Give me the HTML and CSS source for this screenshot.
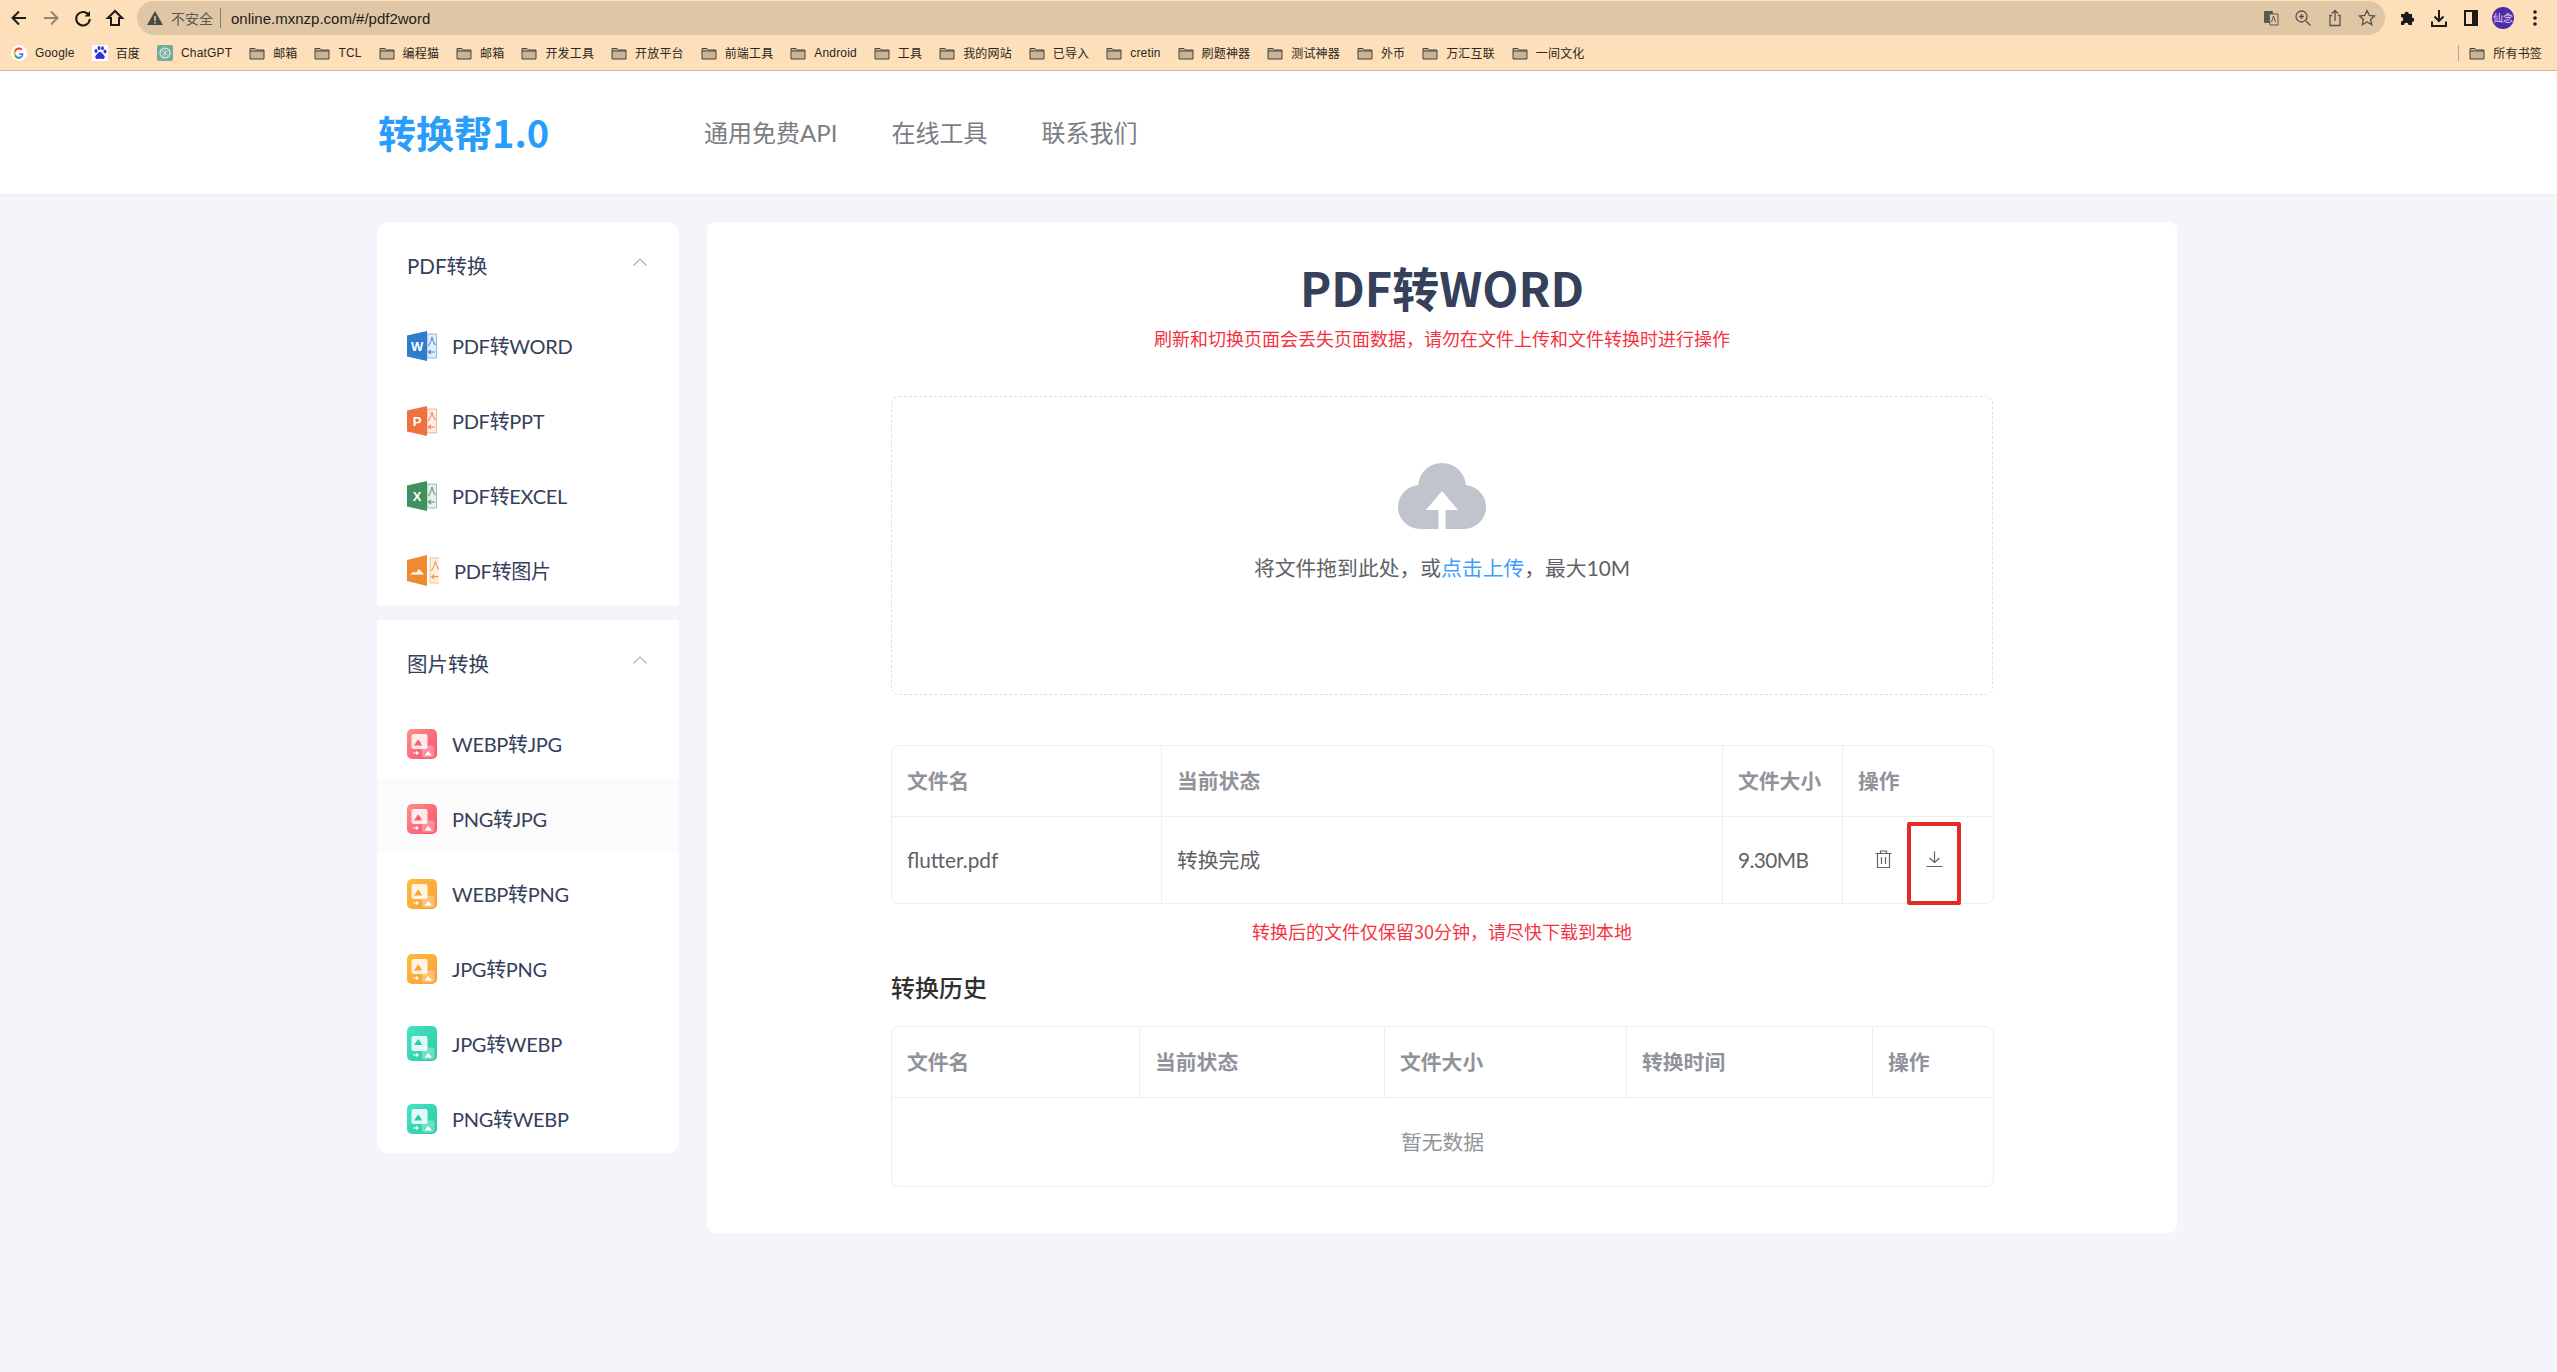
FILE: index.html
```html
<!DOCTYPE html>
<html lang="zh-CN">
<head>
    <meta charset="UTF-8">
    <title>PDF转WORD - 转换帮1.0</title>
    <link rel="stylesheet" href="styles.css">
</head>
<body>

    <!-- Shared icon parts -->
    <svg class="svg-defs" xmlns="http://www.w3.org/2000/svg">
        <defs>
            <linearGradient id="g-red" x1="0" y1="0" x2="1" y2="1"><stop offset="0" stop-color="#fb8f86"/><stop offset="1" stop-color="#fb4f72"/></linearGradient>
            <linearGradient id="g-orange" x1="0" y1="0" x2="1" y2="1"><stop offset="0" stop-color="#fdbb3f"/><stop offset="1" stop-color="#fb9f35"/></linearGradient>
            <linearGradient id="g-green" x1="0" y1="0" x2="1" y2="1"><stop offset="0" stop-color="#45e3c5"/><stop offset="1" stop-color="#2cc9a2"/></linearGradient>
            <symbol id="folder" viewBox="0 0 16 16">
                <path d="M1 3.500h5l1.500 1.500H15v9H1z" fill="#c8b498" stroke="#4a4338" stroke-width="1"/>
                <path d="M1 6h14" stroke="#4a4338" stroke-width="1"/>
            </symbol>
            <symbol id="pdf-panel" viewBox="0 0 30 30">
                <path d="M20 3h9.500v24H20z" fill="currentColor" fill-opacity=".13" stroke="currentColor" stroke-opacity=".5" stroke-width="1"/>
                <path d="M25 6c-1 4-1.500 7-4 9m4-9c1 4 1.500 6 3.500 8" fill="none" stroke="currentColor" stroke-opacity=".75" stroke-width="1.200"/>
                <path d="M28 21h-6m2-2-2.500 2 2.500 2" fill="none" stroke="currentColor" stroke-opacity=".85" stroke-width="1.200"/>
            </symbol>
            <symbol id="tile-art" viewBox="0 0 30 30">
                <rect x="4.500" y="5" width="16" height="15" rx="2" fill="#fff" fill-opacity=".85"/>
                <rect x="15" y="16.500" width="12.500" height="12" rx="2" fill="#fff" fill-opacity=".3"/>
                <path d="M17.500 26.500l3.700-4.500 3.700 4.500z" fill="#fff"/>
                <path d="M6 24h4.500m-1.500-1.500 2 1.500-2 1.500" fill="none" stroke="#fff" stroke-width="1.200"/>
            </symbol>
        </defs>
    </svg>

    <!-- Browser chrome -->
    <div class="browser-toolbar">
        <div class="nav-buttons">
            <svg class="tb-icon" viewBox="0 0 20 20"><path d="M17 10H4M10 3.500 3.500 10l6.500 6.500" class="tb-line"/></svg>
            <svg class="tb-icon tb-off" viewBox="0 0 20 20"><path d="M3 10h13M10 3.500l6.500 6.500-6.500 6.500" class="tb-line"/></svg>
            <svg class="tb-icon" viewBox="0 0 20 20"><path d="M16 7.500A6.800 6.800 0 1 0 16.800 11" class="tb-line"/><path d="M17 3v5.500h-5.500z" fill="currentColor"/></svg>
            <svg class="tb-icon" viewBox="0 0 20 20"><path d="M10 3 2.800 10H6v7h8v-7h3.200z" class="tb-line"/></svg>
        </div>
        <div class="url-bar">
            <svg class="url-warn" viewBox="0 0 18 18"><path d="M9 2 17 16H1z" fill="#4c4a47"/><path d="M8.200 7h1.600v5H8.200zM8.200 13h1.600v1.500H8.200z" fill="#dfc6a5"/></svg>
            <span class="url-flag">不安全</span>
            <span class="url-address">online.mxnzp.com/#/pdf2word</span>
            <div class="url-actions">
                <svg class="tb-icon tb-soft" viewBox="0 0 20 20"><rect x="3" y="3" width="9" height="12" rx="1" fill="#5a5650"/><path d="M8 6h9v11H9z" fill="#dfc6a5" stroke="#5a5650"/><path d="M10.500 14l2-6 2 6" fill="none" stroke="#5a5650"/></svg>
                <svg class="tb-icon tb-soft" viewBox="0 0 20 20"><circle cx="8.500" cy="8.500" r="5.500" class="tb-thin"/><path d="M13 13l4.500 4.500M8.500 6v5M6 8.500h5" class="tb-thin"/></svg>
                <svg class="tb-icon tb-soft" viewBox="0 0 20 20"><path d="M7 7.500H5v10h10v-10h-2M10 13V2.500M7 5.500l3-3 3 3" class="tb-thin"/></svg>
                <svg class="tb-icon tb-soft" viewBox="0 0 20 20"><path d="M10 2.500l2.300 5 5.200.5-3.900 3.500 1.100 5.300L10 14l-4.700 2.800 1.100-5.300L2.500 8l5.200-.5z" class="tb-thin"/></svg>
            </div>
        </div>
        <div class="browser-actions">
            <svg class="tb-icon" viewBox="0 0 20 20"><path d="M4 6h3.500a2.200 2.200 0 1 1 4.400 0H15v3.500a2.200 2.200 0 1 1 0 4.400V17h-3.500a2.200 2.200 0 1 0-4.400 0H4v-3.500a2.200 2.200 0 1 0 0-4.400z" fill="currentColor"/></svg>
            <svg class="tb-icon" viewBox="0 0 20 20"><path d="M10 2v11M5.500 8.500 10 13l4.500-4.500M3 13.500V18h14v-4.500" class="tb-line"/></svg>
            <svg class="tb-icon" viewBox="0 0 20 20"><path d="M4 3h12v14H4z" class="tb-line"/><path d="M11 3h5v14h-5z" fill="currentColor"/></svg>
            <span class="avatar">仙念</span>
            <svg class="tb-icon" viewBox="0 0 20 20"><circle cx="10" cy="4" r="1.800" fill="currentColor"/><circle cx="10" cy="10" r="1.800" fill="currentColor"/><circle cx="10" cy="16" r="1.800" fill="currentColor"/></svg>
        </div>
    </div>

    <div class="bookmarks-bar">
        <a class="bookmark">
            <svg class="bm-icon" viewBox="0 0 16 16"><circle cx="8" cy="8" r="8" fill="#fff"/><path d="M12.500 8.300H8.200v1.700h2.500a2.800 2.800 0 0 1-2.700 1.800V14a5 5 0 0 0 4.500-5.700z" fill="#4285f4"/><path d="M4.900 9.500 3.200 10.800A5.400 5.400 0 0 0 8 14v-2.200a3 3 0 0 1-3.100-2.300z" fill="#34a853"/><path d="M4.900 9.500a3.300 3.300 0 0 1 0-2.500L3.200 5.600a5.600 5.600 0 0 0 0 5.200z" fill="#fbbc05"/><path d="M8 4.600c.8 0 1.500.3 2 .8l1.500-1.500A5.200 5.200 0 0 0 3.200 5.600L4.900 7A3.100 3.100 0 0 1 8 4.600z" fill="#ea4335"/></svg>
            Google
        </a>
        <a class="bookmark">
            <svg class="bm-icon" viewBox="0 0 16 16"><rect width="16" height="16" fill="#fff"/><g fill="#2932e1"><ellipse cx="4" cy="6" rx="1.500" ry="2"/><ellipse cx="7" cy="3" rx="1.500" ry="2"/><ellipse cx="10.500" cy="3.200" rx="1.400" ry="2"/><ellipse cx="13" cy="6.500" rx="1.500" ry="2"/><path d="M8 7c2 0 2.500 2 4 3.200 1.500 1.300.5 4.300-2 3.800-1.200-.2-2.800-.2-4 0-2.500.4-3.500-2.500-2-3.800C5.500 9 6 7 8 7z"/></g></svg>
            百度
        </a>
        <a class="bookmark">
            <svg class="bm-icon" viewBox="0 0 16 16"><rect width="16" height="16" rx="2" fill="#74aa9c"/><circle cx="8" cy="8" r="5" fill="none" stroke="#dcebe6" stroke-width="1.200"/><path d="M5 5.500l6 5M11 5.500l-6 5M8 3v10" stroke="#dcebe6" stroke-width=".8"/></svg>
            ChatGPT
        </a>
        <a class="bookmark"><svg class="bm-icon"><use href="#folder"/></svg>邮箱</a>
        <a class="bookmark"><svg class="bm-icon"><use href="#folder"/></svg>TCL</a>
        <a class="bookmark"><svg class="bm-icon"><use href="#folder"/></svg>编程猫</a>
        <a class="bookmark"><svg class="bm-icon"><use href="#folder"/></svg>邮箱</a>
        <a class="bookmark"><svg class="bm-icon"><use href="#folder"/></svg>开发工具</a>
        <a class="bookmark"><svg class="bm-icon"><use href="#folder"/></svg>开放平台</a>
        <a class="bookmark"><svg class="bm-icon"><use href="#folder"/></svg>前端工具</a>
        <a class="bookmark"><svg class="bm-icon"><use href="#folder"/></svg>Android</a>
        <a class="bookmark"><svg class="bm-icon"><use href="#folder"/></svg>工具</a>
        <a class="bookmark"><svg class="bm-icon"><use href="#folder"/></svg>我的网站</a>
        <a class="bookmark"><svg class="bm-icon"><use href="#folder"/></svg>已导入</a>
        <a class="bookmark"><svg class="bm-icon"><use href="#folder"/></svg>cretin</a>
        <a class="bookmark"><svg class="bm-icon"><use href="#folder"/></svg>刷题神器</a>
        <a class="bookmark"><svg class="bm-icon"><use href="#folder"/></svg>测试神器</a>
        <a class="bookmark"><svg class="bm-icon"><use href="#folder"/></svg>外币</a>
        <a class="bookmark"><svg class="bm-icon"><use href="#folder"/></svg>万汇互联</a>
        <a class="bookmark"><svg class="bm-icon"><use href="#folder"/></svg>一间文化</a>
        <a class="bookmark bookmark-all"><svg class="bm-icon"><use href="#folder"/></svg>所有书签</a>
    </div>

    <!-- Site header -->
    <header class="site-header">
        <div class="container header-inner">
            <a class="logo">转换帮1.0</a>
            <nav class="main-nav">
                <a>通用免费API</a>
                <a>在线工具</a>
                <a>联系我们</a>
            </nav>
        </div>
    </header>

    <div class="container page-body">

        <!-- Sidebar -->
        <aside class="sidebar">
            <section class="menu-group menu-group-first">
                <div class="menu-title">
                    <span>PDF转换</span>
                    <svg class="chevron" viewBox="0 0 14 8"><path d="M.5 7.500 7 1l6.500 6.500"/></svg>
                </div>
                <a class="menu-item">
                    <svg class="menu-icon doc-word" viewBox="0 0 30 30"><path d="M0 4.500 20 0v30L0 25.500z" fill="currentColor"/><text x="10" y="19.500" class="doc-letter">W</text><use href="#pdf-panel"/></svg>
                    PDF转WORD
                </a>
                <a class="menu-item">
                    <svg class="menu-icon doc-ppt" viewBox="0 0 30 30"><path d="M0 4.500 20 0v30L0 25.500z" fill="currentColor"/><text x="10" y="19.500" class="doc-letter">P</text><use href="#pdf-panel"/></svg>
                    PDF转PPT
                </a>
                <a class="menu-item">
                    <svg class="menu-icon doc-excel" viewBox="0 0 30 30"><path d="M0 4.500 20 0v30L0 25.500z" fill="currentColor"/><text x="10" y="19.500" class="doc-letter">X</text><use href="#pdf-panel"/></svg>
                    PDF转EXCEL
                </a>
                <a class="menu-item">
                    <svg class="menu-icon menu-icon-wide doc-image" viewBox="0 0 32 31"><path d="M0 5 20 0v31L0 26z" fill="currentColor"/><path d="M3 19.500l4-3 2 1.500 3-4 5 5.500z" fill="#fff"/><use href="#pdf-panel" x="2"/></svg>
                    PDF转图片
                </a>
            </section>

            <section class="menu-group menu-group-last">
                <div class="menu-title">
                    <span>图片转换</span>
                    <svg class="chevron" viewBox="0 0 14 8"><path d="M.5 7.500 7 1l6.500 6.500"/></svg>
                </div>
                <a class="menu-item">
                    <svg class="menu-icon tile-red" viewBox="0 0 30 30"><rect width="30" height="30" rx="5" fill="url(#g-red)"/><use href="#tile-art"/><path d="M7 16.500l4-6 2 2 2 4z" fill="currentColor"/></svg>
                    WEBP转JPG
                </a>
                <a class="menu-item menu-item-hover">
                    <svg class="menu-icon tile-red" viewBox="0 0 30 30"><rect width="30" height="30" rx="5" fill="url(#g-red)"/><use href="#tile-art"/><path d="M7 16.500l4-6 2 2 2 4z" fill="currentColor"/></svg>
                    PNG转JPG
                </a>
                <a class="menu-item">
                    <svg class="menu-icon tile-orange" viewBox="0 0 30 30"><rect width="30" height="30" rx="5" fill="url(#g-orange)"/><use href="#tile-art"/><path d="M7 16.500l4-6 2 2 2 4z" fill="currentColor"/></svg>
                    WEBP转PNG
                </a>
                <a class="menu-item">
                    <svg class="menu-icon tile-orange" viewBox="0 0 30 30"><rect width="30" height="30" rx="5" fill="url(#g-orange)"/><use href="#tile-art"/><path d="M7 16.500l4-6 2 2 2 4z" fill="currentColor"/></svg>
                    JPG转PNG
                </a>
                <a class="menu-item">
                    <svg class="menu-icon menu-icon-tall tile-green" viewBox="0 0 30 35" preserveAspectRatio="none"><rect width="30" height="35" rx="5" fill="url(#g-green)"/><use href="#tile-art" y="2.500"/><path d="M7 19l4-6 2 2 2 4z" fill="currentColor"/></svg>
                    JPG转WEBP
                </a>
                <a class="menu-item">
                    <svg class="menu-icon tile-green" viewBox="0 0 30 30"><rect width="30" height="30" rx="5" fill="url(#g-green)"/><use href="#tile-art"/><path d="M7 16.500l4-6 2 2 2 4z" fill="currentColor"/></svg>
                    PNG转WEBP
                </a>
            </section>
        </aside>

        <!-- Main card -->
        <main class="main-card">
            <h1 class="page-title">PDF转WORD</h1>
            <p class="warn-text warn-top">刷新和切换页面会丢失页面数据&#xFF0C;请勿在文件上传和文件转换时进行操作</p>

            <div class="upload-box">
                <svg class="upload-cloud" viewBox="0 0 88 66">
                    <g fill="#c0c4cc">
                        <circle cx="44" cy="24" r="24"/>
                        <circle cx="22" cy="44" r="22"/>
                        <circle cx="66" cy="44" r="22"/>
                        <rect x="22" y="30" width="44" height="36"/>
                    </g>
                    <path d="M44 28 60 47H47.500V66h-7V47H28z" fill="#fff"/>
                </svg>
                <p class="upload-text">将文件拖到此处&#xFF0C;或<a class="upload-link">点击上传</a>&#xFF0C;最大10M</p>
            </div>

            <table class="data-table">
                <thead>
                    <tr>
                        <th class="col-a-name">文件名</th>
                        <th class="col-a-status">当前状态</th>
                        <th class="col-a-size">文件大小</th>
                        <th class="col-a-ops">操作</th>
                    </tr>
                </thead>
                <tbody>
                    <tr class="row-file">
                        <td>flutter.pdf</td>
                        <td>转换完成</td>
                        <td class="cell-size">9.30MB</td>
                        <td class="cell-ops">
                            <div class="op-icons">
                                <svg class="op-icon" viewBox="0 0 17 18"><path d="M.5 3.500h16M5.500 3.500v-2.500h6v2.500M2.500 3.500v14h12v-14M6.500 7v7M10.500 7v7"/></svg>
                                <svg class="op-icon" viewBox="0 0 17 18"><path d="M8.500 1.500v11M3.500 8l5 4.500 5-4.500M.5 16.500h16"/></svg>
                            </div>
                            <span class="red-mark"></span>
                        </td>
                    </tr>
                </tbody>
            </table>

            <p class="warn-text warn-note">转换后的文件仅保留30分钟&#xFF0C;请尽快下载到本地</p>

            <h2 class="history-title">转换历史</h2>

            <table class="data-table">
                <thead>
                    <tr>
                        <th class="col-b-name">文件名</th>
                        <th class="col-b-status">当前状态</th>
                        <th class="col-b-size">文件大小</th>
                        <th class="col-b-time">转换时间</th>
                        <th class="col-b-ops">操作</th>
                    </tr>
                </thead>
                <tbody>
                    <tr class="row-empty">
                        <td colspan="5">暂无数据</td>
                    </tr>
                </tbody>
            </table>
        </main>
    </div>

</body>
</html>
```

FILE: styles.css
```css
* {
    box-sizing: border-box;
}
body {
    margin: 0;
    background-color: #f4f5fa;
    color: #606266;
    font-family: Lato, "Noto Sans CJK SC", sans-serif;
    min-height: 100vh;
}
a {
    text-decoration: none;
    color: inherit;
}
p, h1, h2 {
    margin: 0;
}
.svg-defs {
    position: absolute;
    width: 0;
    height: 0;
}

/* Browser chrome */
.browser-toolbar {
    height: 36px;
    background-color: #fddfb9;
    display: flex;
    align-items: center;
    padding-left: 9px;
    font-family: "Liberation Sans", "Noto Sans CJK SC", sans-serif;
}
.nav-buttons {
    display: flex;
    gap: 12px;
    margin-right: 12px;
}
.tb-icon {
    width: 20px;
    height: 20px;
    flex: none;
    color: #1d1a17;
}
.tb-off {
    color: #94856f;
}
.tb-soft {
    color: #55524d;
}
.tb-line {
    fill: none;
    stroke: currentColor;
    stroke-width: 2;
}
.tb-thin {
    fill: none;
    stroke: currentColor;
    stroke-width: 1.3;
}
.url-bar {
    flex: 1;
    height: 34px;
    background-color: #dfc6a5;
    border-radius: 17px;
    display: flex;
    align-items: center;
    padding-left: 9px;
}
.url-warn {
    width: 18px;
    height: 18px;
    margin-right: 7px;
}
.url-flag {
    font-size: 14px;
    color: #5a5650;
    padding-right: 7px;
    border-right: 1px solid #8e7f6a;
    margin-right: 10px;
    font-family: "Noto Sans CJK SC", sans-serif;
    line-height: 20px;
}
.url-address {
    font-size: 15px;
    color: #1f1c18;
}
.url-actions {
    margin-left: auto;
    display: flex;
    gap: 12px;
    padding-right: 8px;
}
.browser-actions {
    width: 172px;
    flex: none;
    display: flex;
    align-items: center;
    gap: 12px;
    padding-left: 12px;
}
.avatar {
    width: 22px;
    height: 22px;
    border-radius: 50%;
    background-color: #4f2aa8;
    color: #e4dcf5;
    font-size: 10px;
    line-height: 22px;
    text-align: center;
    flex: none;
    margin: 0 -1px;
    font-family: "Noto Sans CJK SC", sans-serif;
    white-space: nowrap;
}
.bookmarks-bar {
    height: 35px;
    background-color: #fddfb9;
    border-bottom: 1px solid #d4bc9b;
    display: flex;
    align-items: center;
    gap: 17px;
    padding: 0 15px 1px 11px;
    font-family: "Liberation Sans", "Noto Sans CJK SC", sans-serif;
    font-size: 12px;
    letter-spacing: 0.16px;
    color: #2a2622;
}
.bookmark {
    display: flex;
    align-items: center;
    gap: 8px;
    white-space: nowrap;
}
.bookmark-all {
    margin-left: auto;
    padding-left: 10px;
    border-left: 1px solid #b9a487;
    height: 16px;
}
.bm-icon {
    width: 16px;
    height: 16px;
    flex: none;
}

/* Site header */
.site-header {
    height: 123px;
    background-color: #fff;
    box-shadow: 0 1px 3px rgba(0, 0, 0, 0.04);
}
.container {
    width: 1800px;
    margin-left: 377px;
}
.header-inner {
    height: 100%;
    display: flex;
    align-items: center;
    padding-bottom: 3px;
}
.logo {
    width: 327px;
    font-size: 38px;
    font-weight: 700;
    color: #2a9dfb;
    font-family: "Noto Sans CJK SC", sans-serif;
    padding-left: 1px;
}
.main-nav {
    display: flex;
    gap: 54px;
    font-size: 24px;
    color: #7a7d82;
}

/* Page layout */
.page-body {
    display: flex;
    align-items: flex-start;
    gap: 28px;
    margin-top: 28px;
    padding-bottom: 60px;
}
.sidebar {
    width: 302px;
    flex: none;
    display: flex;
    flex-direction: column;
    gap: 15px;
}
.menu-group {
    background-color: #fff;
}
.menu-group-first {
    border-radius: 12px 12px 0 0;
}
.menu-group-last {
    border-radius: 0 0 12px 12px;
}
.menu-title {
    height: 83px;
    padding: 30px 30px 0;
    display: flex;
    align-items: flex-start;
    justify-content: space-between;
    font-size: 20.5px;
    color: #35405a;
    line-height: 28px;
}
.chevron {
    width: 14px;
    height: 8px;
    margin: 6px 2px 0 0;
    fill: none;
    stroke: #aeb0b5;
    stroke-width: 1.2;
}
.menu-item {
    height: 75px;
    padding: 6px 30px 0;
    display: flex;
    align-items: center;
    gap: 15px;
    font-size: 20px;
    letter-spacing: -0.3px;
    color: #35405a;
}
.menu-item-hover {
    background-color: #fbfbfc;
}
.menu-icon {
    width: 30px;
    height: 30px;
    flex: none;
}
.menu-icon-wide {
    width: 32px;
    height: 31px;
}
.menu-icon-tall {
    height: 35px;
}
.doc-word {
    color: #2f7bcd;
}
.doc-ppt {
    color: #ee7140;
}
.doc-excel {
    color: #3f9160;
}
.doc-image {
    color: #ef8a33;
}
.doc-letter {
    fill: #fff;
    font-family: "Liberation Sans", sans-serif;
    font-size: 13px;
    font-weight: 700;
    text-anchor: middle;
}
.tile-red {
    color: #f9606f;
}
.tile-orange {
    color: #fca336;
}
.tile-green {
    color: #2fcca8;
}

/* Main card */
.main-card {
    width: 1470px;
    flex: none;
    background-color: #fff;
    border-radius: 8px;
    padding: 37px 184px 46px;
}
.page-title {
    font-family: "Noto Sans CJK SC", sans-serif;
    font-size: 47px;
    font-weight: 700;
    line-height: 56px;
    color: #35405a;
    text-align: center;
}
.warn-text {
    font-family: "Noto Sans CJK SC", sans-serif;
    font-size: 18px;
    line-height: 26px;
    color: #f5333f;
    text-align: center;
}
.warn-top {
    margin-top: 10px;
}
.warn-note {
    margin-top: 14px;
}
.upload-box {
    margin-top: 45px;
    height: 299px;
    border: 1px dashed #dcdfe6;
    border-radius: 8px;
    padding-top: 66px;
    text-align: center;
}
.upload-cloud {
    display: block;
    width: 88px;
    height: 66px;
    margin: 0 auto;
}
.upload-text {
    margin-top: 24px;
    font-size: 20.8px;
    line-height: 30px;
    color: #606266;
}
.upload-link {
    color: #409eff;
}

/* Tables */
.data-table {
    width: 100%;
    table-layout: fixed;
    border-collapse: separate;
    border-spacing: 0;
    border: 1px solid #ebeef5;
    border-radius: 8px;
    margin-top: 50px;
    font-size: 20.8px;
}
.data-table th,
.data-table td {
    padding: 0 15px 2px;
    text-align: left;
    border-right: 1px solid #ebeef5;
}
.data-table th:last-child,
.data-table td:last-child {
    border-right: none;
}
.data-table th {
    height: 71px;
    font-weight: 700;
    color: #909399;
    border-bottom: 1px solid #ebeef5;
}
.row-file td {
    height: 86px;
}
.data-table .cell-size {
    letter-spacing: -0.6px;
}
.col-a-name { width: 270px; }
.col-a-status { width: 561px; }
.col-a-size { width: 120px; }
.col-a-ops { width: 150px; }
.col-b-name { width: 248px; }
.col-b-status { width: 245px; }
.col-b-size { width: 242px; }
.col-b-time { width: 246px; }
.col-b-ops { width: 120px; }
.data-table .row-empty td {
    height: 88px;
    text-align: center;
    color: #909399;
    border-right: none;
}
.cell-ops {
    position: relative;
}
.op-icons {
    display: flex;
    gap: 34px;
    padding-left: 17px;
}
.op-icon {
    width: 17px;
    height: 18px;
    fill: none;
    stroke: #606266;
    stroke-width: 1.2;
}
.red-mark {
    position: absolute;
    left: 64px;
    top: 5px;
    width: 54px;
    height: 83px;
    border: 4px solid #e02b27;
    border-radius: 2px;
}
.warn-note + .history-title {
    margin-top: 26px;
}
.history-title {
    font-family: "Noto Sans CJK SC", sans-serif;
    font-size: 24px;
    font-weight: 500;
    line-height: 34px;
    color: #303133;
}
.history-title + .data-table {
    margin-top: 22px;
}
```
